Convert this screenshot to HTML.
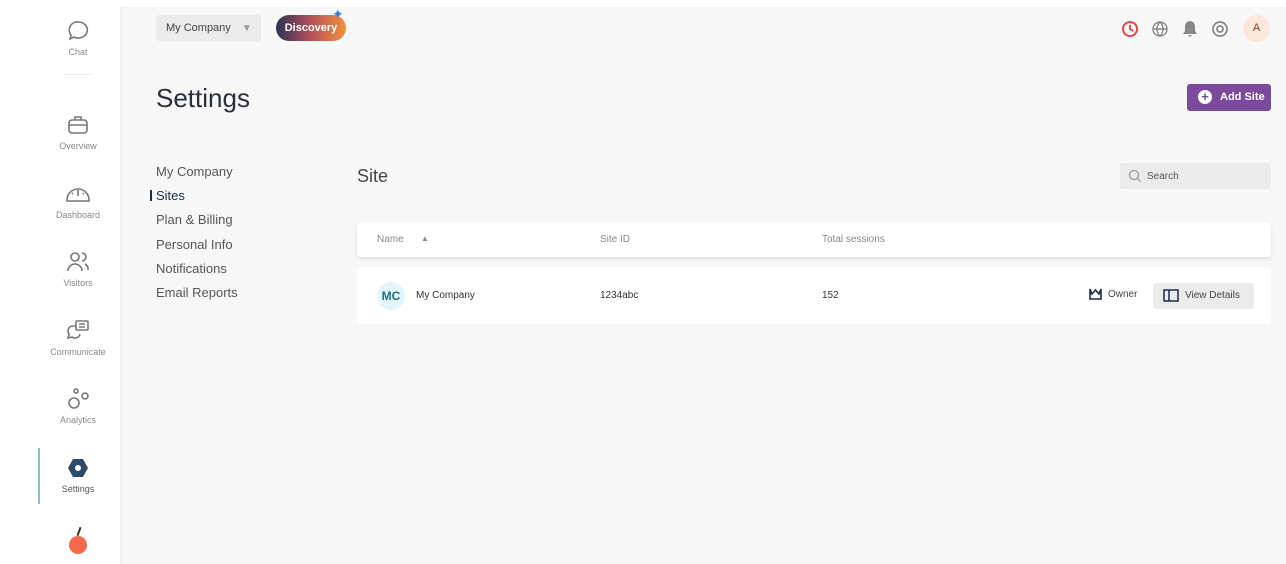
<!DOCTYPE html>
<html><head><meta charset="utf-8"><style>
*{box-sizing:border-box;margin:0;padding:0}
body{width:1286px;height:564px;overflow:hidden;background:#fff;font-family:"Liberation Sans",sans-serif;position:relative;color:#333}
.side{position:absolute;left:0;top:0;width:120px;height:564px;background:#fff}
.main{position:absolute;left:120px;top:7px;width:1166px;height:557px;background:#f7f7f7;box-shadow:inset 2px 0 3px rgba(0,0,0,.04)}
.ni{position:absolute;left:0;width:156px;text-align:center;font-size:9px;color:#888}
.ni svg{display:block;margin:0 auto 4px}
.a{position:absolute;white-space:nowrap}
.menu div{position:absolute;left:156px;font-size:13px;color:#555}
</style></head><body>
<div class="side">
 <div class="ni" style="top:19px"><svg width="24" height="24" viewBox="0 0 24 24" fill="none" stroke="#777" stroke-width="1.6"><path d="M12 3a9 8 0 1 1-4 15l-4 2 1-4A8 8 0 0 1 12 3z"/></svg>Chat</div>
 <div style="position:absolute;left:64px;top:74px;width:28px;height:1px;background:#eee"></div>
 <div class="ni" style="top:113px"><svg width="24" height="24" viewBox="0 0 24 24" fill="none" stroke="#777" stroke-width="1.6"><rect x="3" y="7" width="18" height="13" rx="3"/><path d="M9 7V4h6v3M3 12h18"/></svg>Overview</div>
 <div class="ni" style="top:182px"><svg width="26" height="24" viewBox="0 0 26 24" fill="none" stroke="#777" stroke-width="1.6"><path d="M2 18a11 11 0 1 1 22 0v1H2z"/><path d="M13 8v6M7 11l1 1M19 11l-1 1"/></svg>Dashboard</div>
 <div class="ni" style="top:250px"><svg width="24" height="24" viewBox="0 0 24 24" fill="none" stroke="#777" stroke-width="1.6"><circle cx="9" cy="7" r="4"/><path d="M2 21a7 7 0 0 1 14 0M16 3a4 4 0 0 1 0 8M19 14a6 6 0 0 1 3 6"/></svg>Visitors</div>
 <div class="ni" style="top:319px"><svg width="24" height="24" viewBox="0 0 24 24" fill="none" stroke="#777" stroke-width="1.6"><rect x="10" y="2" width="12" height="9" rx="1"/><path d="M13 5h6M13 8h6M10 7H7a5 5 0 0 0-4 8l-1 4 4-1a5 5 0 0 0 8-3"/></svg>Communicate</div>
 <div class="ni" style="top:387px"><svg width="24" height="24" viewBox="0 0 24 24" fill="none" stroke="#777" stroke-width="1.6"><circle cx="8" cy="16" r="5"/><circle cx="19" cy="9" r="3"/><circle cx="10" cy="4" r="2"/></svg>Analytics</div>
 <div style="position:absolute;left:38px;top:448px;width:2px;height:56px;background:#7cc6d6"></div>
 <div class="ni" style="top:456px;color:#555"><svg width="24" height="24" viewBox="0 0 24 24"><path d="M7 3h10l5 9-5 9H7l-5-9z" fill="#2e4a6b"/><circle cx="12" cy="12" r="3" fill="#fff"/></svg>Settings</div>
 <div class="a" style="left:69px;top:536px;width:18px;height:18px;border-radius:50%;background:#f4694a"></div>
 <div class="a" style="left:78px;top:527px;width:2px;height:9px;background:#333;transform:rotate(20deg)"></div>
</div>
<div class="main"></div>
<div class="a" style="left:156px;top:15px;width:105px;height:26px;background:#ebebeb;border-radius:3px;font-size:11px;color:#444;padding:7px 10px">My Company <span style="color:#999;margin-left:8px;font-size:10px">▼</span></div>
<div class="a" style="left:276px;top:15px;width:70px;height:26px;border-radius:13px;background:linear-gradient(90deg,#2b3356,#b6505a 50%,#f3913a);color:#fff;font-size:11px;font-weight:bold;text-align:center;line-height:26px">Discovery</div>
<div class="a" style="left:332px;top:6px;color:#3d7fd9;font-size:14px">✦</div>
<svg class="a" style="left:1121px;top:20px" width="18" height="18" viewBox="0 0 18 18" fill="none" stroke="#e53935" stroke-width="1.8"><circle cx="9" cy="9" r="7"/><path d="M9 5v4l3 2"/></svg>
<svg class="a" style="left:1151px;top:20px" width="18" height="18" viewBox="0 0 18 18" fill="none" stroke="#888" stroke-width="1.4"><circle cx="9" cy="9" r="7"/><path d="M2 9h14M9 2c-4 4-4 10 0 14M9 2c4 4 4 10 0 14"/></svg>
<svg class="a" style="left:1182px;top:20px" width="16" height="18" viewBox="0 0 16 18"><path d="M8 1a5 5 0 0 0-5 5v5l-2 3h14l-2-3V6a5 5 0 0 0-5-5zM6 15h4l-2 2z" fill="#888"/></svg>
<svg class="a" style="left:1211px;top:20px" width="18" height="18" viewBox="0 0 18 18" fill="none" stroke="#888" stroke-width="1.8"><circle cx="9" cy="9" r="7"/><circle cx="9" cy="9" r="3"/></svg>
<div class="a" style="left:1243px;top:15px;width:27px;height:27px;border-radius:50%;background:#fde6dc;color:#8a3c2c;font-size:11px;text-align:center;line-height:27px">A</div>
<div class="a" style="left:156px;top:83px;font-size:26px;color:#2a2f3a">Settings</div>
<div class="a" style="left:1187px;top:84px;width:84px;height:27px;background:#7b4a9c;border-radius:3px;color:#fff;font-size:11px;font-weight:bold;line-height:27px;padding-left:33px">Add Site</div>
<div class="a" style="left:1198px;top:90px;width:14px;height:14px;border-radius:50%;background:#fff;color:#7b4a9c;font-weight:bold;font-size:13px;text-align:center;line-height:14px">+</div>
<div class="menu">
 <div style="top:164px">My Company</div>
 <div style="top:188px;color:#1e2b45">Sites</div>
 <div style="top:212px">Plan &amp; Billing</div>
 <div style="top:237px">Personal Info</div>
 <div style="top:261px">Notifications</div>
 <div style="top:285px">Email Reports</div>
</div>
<div class="a" style="left:150px;top:190px;width:2px;height:11px;background:#1e2b45"></div>
<div class="a" style="left:357px;top:166px;font-size:18px;color:#444">Site</div>
<div class="a" style="left:1120px;top:163px;width:151px;height:26px;background:#ebebeb;border-radius:3px;font-size:10px;color:#555;padding:8px 0 0 27px">Search</div>
<svg class="a" style="left:1128px;top:169px" width="14" height="14" viewBox="0 0 14 14" fill="none" stroke="#999" stroke-width="1.3"><circle cx="6" cy="6" r="4.5"/><path d="M9.5 9.5l3 3"/></svg>
<div class="a" style="left:357px;top:222px;width:914px;height:35px;background:#fff;border-radius:3px;box-shadow:0 2px 4px rgba(0,0,0,.1);font-size:10px;color:#888">
 <span class="a" style="left:20px;top:12px">Name</span><span class="a" style="left:64px;top:12px;font-size:8px">▲</span>
 <span class="a" style="left:243px;top:12px">Site ID</span>
 <span class="a" style="left:465px;top:12px">Total sessions</span>
</div>
<div class="a" style="left:357px;top:267px;width:914px;height:57px;background:#fff;border-radius:3px;font-size:10px;color:#333">
 <div class="a" style="left:20px;top:15px;width:28px;height:28px;border-radius:50%;background:#e3f5fb;color:#1f6d85;font-size:12px;font-weight:bold;text-align:center;line-height:28px">MC</div>
 <span class="a" style="left:59px;top:23px">My Company</span>
 <span class="a" style="left:243px;top:23px">1234abc</span>
 <span class="a" style="left:465px;top:23px">152</span>
 <svg class="a" style="left:731px;top:20px" width="15" height="14" viewBox="0 0 15 14" fill="none" stroke="#1e2b45" stroke-width="1.6"><path d="M2 2l2 5 3.5-4 3.5 4 2-5v10H2z"/></svg>
 <span class="a" style="left:751px;top:22px;color:#444">Owner</span>
 <div class="a" style="left:796px;top:16px;width:101px;height:26px;background:#ebebeb;border-radius:3px;color:#444;padding:7px 0 0 32px">View Details</div>
 <svg class="a" style="left:806px;top:22px" width="16" height="13" viewBox="0 0 16 13" fill="none" stroke="#1e2b45" stroke-width="1.5"><rect x="1" y="1" width="14" height="11"/><path d="M6 1v11"/></svg>
</div>
</body></html>
